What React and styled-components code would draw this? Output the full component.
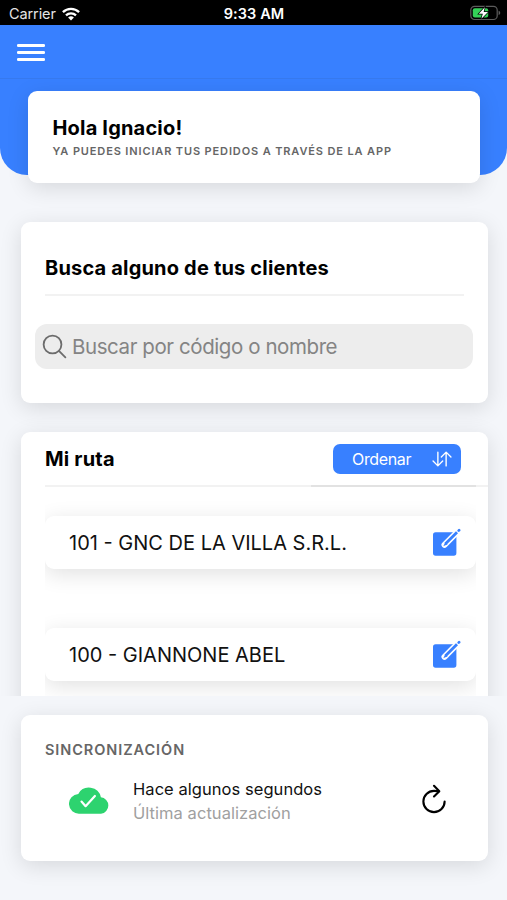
import styled, { createGlobalStyle } from "styled-components";
import {
  IoRefreshOutline,
  IoSearchOutline,
  IoSwapVerticalOutline,
} from "react-icons/io5";

const clients = [
  { code: 101, name: "GNC DE LA VILLA S.R.L." },
  { code: 100, name: "GIANNONE ABEL" },
];

function WifiIcon() {
  return (
    <svg width="18" height="14" viewBox="0 0 18 14">
      <g fill="none" stroke="#fff" strokeWidth="2.3">
        <path d="M0.9 5.1a11.6 11.6 0 0 1 16.2 0" />
        <path d="M4 8.4a7.2 7.2 0 0 1 10 0" />
      </g>
      <path d="M9 13.6 6.1 10.6a4.1 4.1 0 0 1 5.8 0z" fill="#fff" />
    </svg>
  );
}

function BatteryIcon() {
  return (
    <svg width="31" height="16" viewBox="0 0 31 16">
      <rect x="0.8" y="1.3" width="26.4" height="13.2" rx="3.8" fill="none" stroke="#5c5c5c" strokeWidth="1.2" />
      <path d="M28.6 5.7v4.4q1.7-.6 1.7-2.2t-1.7-2.2z" fill="#5c5c5c" />
      <rect x="2.8" y="3.2" width="15.4" height="9.4" rx="2" fill="#34d158" />
      <path
        d="M14.8 2.2 8.8 8.8h4L11.4 13.8l6.6-6.8h-4.3z"
        fill="#fff"
        stroke="#000"
        strokeWidth="1.4"
        paintOrder="stroke"
      />
    </svg>
  );
}

function EditIcon() {
  return (
    <svg width="29" height="29" viewBox="0 0 29 29" fill="none" strokeLinecap="round">
      <rect x="1" y="4.3" width="23.4" height="23.4" rx="2.6" fill="#3880ff" />
      <path d="M12.5 16.8 27.5 1.8" stroke="#fff" strokeWidth="6" />
      <path d="M11.3 18.2 13.3 13.9 15.6 16.2z" fill="#3880ff" />
      <path d="M13.5 15.8 25 4.3" stroke="#3880ff" strokeWidth="2.8" strokeLinecap="butt" />
      <path d="M26.7 2.6 27.1 2.2" stroke="#3880ff" strokeWidth="2.7" />
    </svg>
  );
}

function CloudIcon() {
  return (
    <svg width="41" height="28" viewBox="0 0 41 28">
      <path
        d="M10.5 27.7A9.9 9.9 0 0 1 9.3 7.9 12.2 12.2 0 0 1 31.9 11.2 8.3 8.3 0 0 1 32 27.7z"
        fill="#2dd36f"
      />
      <path
        d="M12.5 15.6 16.6 20.2 25.9 10"
        fill="none"
        stroke="#fff"
        strokeWidth="2.2"
        strokeLinecap="round"
        strokeLinejoin="round"
      />
    </svg>
  );
}

function App() {
  return (
    <Screen>
      <GlobalStyle />
      <StatusBar>
        <Carrier>
          Carrier <WifiIcon />
        </Carrier>
        <Clock>9:33 AM</Clock>
        <Battery>
          <BatteryIcon />
        </Battery>
      </StatusBar>
      <Toolbar>
        <MenuButton aria-label="Menu">
          <MenuLine />
          <MenuLine />
          <MenuLine />
        </MenuButton>
      </Toolbar>
      <Content>
        <Hero>
          <Greeting>
            <Title>Hola Ignacio!</Title>
            <Subtitle>Ya puedes iniciar tus pedidos a través de la app</Subtitle>
          </Greeting>
        </Hero>
        <SearchCard>
          <SearchHeader>
            <Title>Busca alguno de tus clientes</Title>
          </SearchHeader>
          <SearchBar>
            <IoSearchOutline size={29} />
            <Placeholder>Buscar por código o nombre</Placeholder>
          </SearchBar>
        </SearchCard>
        <RouteCard>
          <RouteHeader>
            <Title>Mi ruta</Title>
            <SortButton>
              Ordenar <IoSwapVerticalOutline size={22} />
            </SortButton>
          </RouteHeader>
          <Rule>
            <RuleAccent />
          </Rule>
          <List>
            {clients.map((client) => (
              <Slot key={client.code}>
                <Client>
                  <ClientName>
                    {client.code} - {client.name}
                  </ClientName>
                  <EditIcon />
                </Client>
              </Slot>
            ))}
          </List>
        </RouteCard>
      </Content>
      <Footer>
        <SyncCard>
          <SyncTitle>Sincronización</SyncTitle>
          <SyncRow>
            <CloudIcon />
            <SyncText>
              <SyncLine $color="#111">Hace algunos segundos</SyncLine>
              <SyncLine $color="#a0a0a0">Última actualización</SyncLine>
            </SyncText>
            <RefreshButton aria-label="Actualizar">
              <IoRefreshOutline size={34} />
            </RefreshButton>
          </SyncRow>
        </SyncCard>
      </Footer>
    </Screen>
  );
}

const GlobalStyle = createGlobalStyle`
  * {
    box-sizing: border-box;
  }
  body {
    margin: 0;
    font-family: Inter, "Liberation Sans", sans-serif;
    color: #000;
  }
  svg {
    display: block;
    flex-shrink: 0;
  }
`;

const Screen = styled.div`
  display: grid;
  grid-template-rows: 25px 54px minmax(0, 1fr) 204px;
  height: 900px;
  overflow: hidden;
  background-color: #f4f6fa;
`;

const StatusBar = styled.div`
  display: grid;
  grid-template-columns: 1fr auto 1fr;
  align-items: center;
  padding: 2px 6px 0 9px;
  background-color: #000;
  color: #fff;
`;

const Carrier = styled.div`
  display: flex;
  align-items: center;
  gap: 6px;
  font-size: 14.5px;
  letter-spacing: -0.1px;
  color: #e4e4e4;
`;

const Clock = styled.div`
  padding-right: 2px;
  font-size: 14.5px;
  font-weight: 600;
  letter-spacing: 0.1px;
`;

const Battery = styled.div`
  display: flex;
  justify-content: flex-end;
  padding-bottom: 1px;
`;

const Toolbar = styled.header`
  display: flex;
  align-items: center;
  padding: 2px 17px 0;
  background-color: #3880ff;
  border-bottom: 1px solid #3679ee;
`;

const MenuButton = styled.button`
  display: flex;
  flex-direction: column;
  gap: 4.5px;
  padding: 0;
  border: none;
  background: none;
`;

const MenuLine = styled.span`
  width: 28px;
  height: 2.6px;
  border-radius: 1.3px;
  background-color: #fff;
`;

const Content = styled.main`
  overflow: hidden;
`;

const Hero = styled.div`
  height: 96px;
  padding: 12px 27px 0 28px;
  background-color: #3880ff;
  border-radius: 0 0 27px 27px;
`;

const Card = styled.section`
  background-color: #fff;
  border-radius: 9px;
  box-shadow: 0 5px 22px rgba(0, 0, 0, 0.12);
`;

const Greeting = styled(Card)`
  height: 92px;
  padding: 24px 24px 0 24.5px;
`;

const Title = styled.h2`
  margin: 0;
  font-size: 20px;
  line-height: 26px;
  font-weight: 700;
  letter-spacing: 0.18px;
  white-space: nowrap;
`;

const Subtitle = styled.p`
  margin: 2px 0 0;
  font-size: 11px;
  line-height: 16px;
  font-weight: 600;
  letter-spacing: 0.87px;
  text-transform: uppercase;
  white-space: nowrap;
  color: #666;
`;

const SearchCard = styled(Card)`
  height: 181px;
  margin: 47px 19px 0 21px;
  padding: 33px 15px 0 14px;
`;

const SearchHeader = styled.div`
  height: 41px;
  margin: 0 9px 28px 10px;
  border-bottom: 2px solid #f2f2f2;
`;

const SearchBar = styled.div`
  display: flex;
  align-items: center;
  gap: 3px;
  height: 45px;
  padding-left: 5px;
  border-radius: 12px;
  background-color: #ededed;
  color: #6c6c6c;
`;

const Placeholder = styled.span`
  font-size: 20.5px;
  letter-spacing: -0.42px;
  color: #848484;
`;

const RouteCard = styled(Card)`
  height: 300px;
  margin: 29px 19px 0 21px;
`;

const RouteHeader = styled.div`
  display: flex;
  align-items: center;
  justify-content: space-between;
  height: 53px;
  padding: 0 27px 0 24px;
`;

const SortButton = styled.button`
  display: flex;
  align-items: center;
  justify-content: space-between;
  width: 128px;
  height: 30px;
  padding: 0 8px 0 19px;
  border: none;
  border-radius: 7px;
  background-color: #3880ff;
  color: #fff;
  font-family: inherit;
  font-size: 16px;
  letter-spacing: -0.35px;
`;

const Rule = styled.div`
  display: flex;
  justify-content: flex-end;
  height: 2px;
  margin-left: 24px;
  padding-right: 12px;
  background-color: #f2f2f2;
`;

const RuleAccent = styled.span`
  width: 165px;
  background-color: #e2e2e2;
`;

const List = styled.div`
  padding: 0 12px 0 24px;
`;

/* clips the row's shadow at the sides, as a list item does */
const Slot = styled.div`
  height: 112px;
  padding-top: 29px;
  overflow: hidden;
`;

const Client = styled.div`
  display: flex;
  align-items: center;
  justify-content: space-between;
  height: 53px;
  padding: 0 15px 0 24px;
  border-radius: 9px;
  box-shadow: 0 5px 22px rgba(0, 0, 0, 0.12);
  background-color: #fff;
`;

const ClientName = styled.span`
  font-size: 20px;
  white-space: nowrap;
  color: #111;
`;

const Footer = styled.footer`
  padding: 19px 19px 0 21px;
  background-color: #f4f6fa;
`;

const SyncCard = styled(Card)`
  height: 146px;
  padding: 26px 37px 0 24px;
`;

const SyncTitle = styled.h3`
  margin: 0;
  font-size: 14.5px;
  line-height: 18px;
  font-weight: 600;
  letter-spacing: 0.93px;
  text-transform: uppercase;
  color: #666;
`;

const SyncRow = styled.div`
  display: flex;
  align-items: center;
  margin-top: 16px;
  padding-left: 24px;
`;

const SyncText = styled.div`
  flex: 1;
  padding: 2px 0 0 23px;
`;

const SyncLine = styled.div`
  font-size: 16.5px;
  line-height: 24px;
  letter-spacing: 0.05px;
  color: ${(props) => props.$color};
`;

const RefreshButton = styled.button`
  padding: 0 0 2px;
  border: none;
  background: none;
  color: #000;
`;

export default App;
